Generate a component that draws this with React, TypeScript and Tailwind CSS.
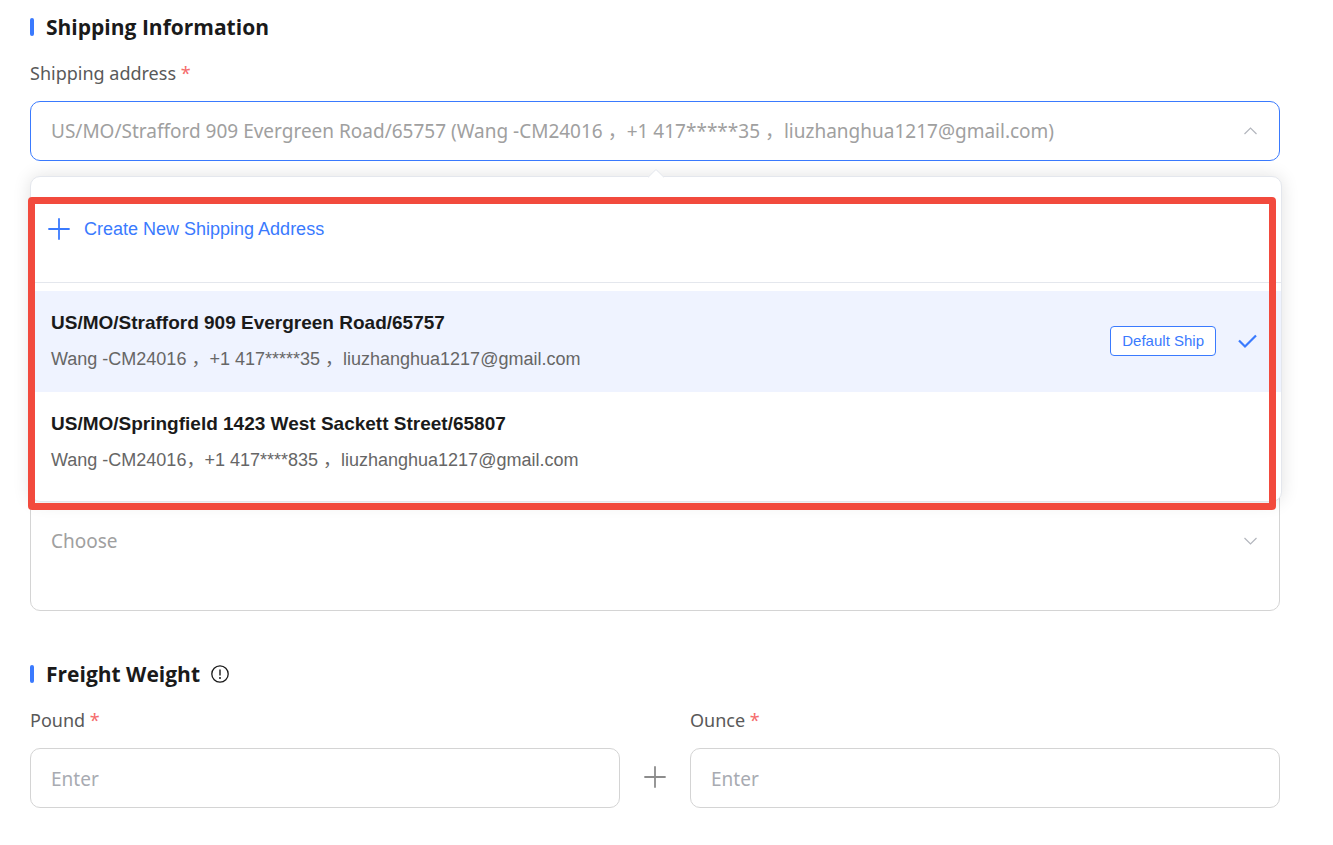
import type { ReactNode } from 'react';

type Address = {
  title: string;
  contact: string;
  isDefault?: boolean;
};

const addresses: Address[] = [
  {
    title: 'US/MO/Strafford 909 Evergreen Road/65757',
    contact: 'Wang -CM24016 ，+1 417*****35 ，liuzhanghua1217@gmail.com',
    isDefault: true,
  },
  {
    title: 'US/MO/Springfield 1423 West Sackett Street/65807',
    contact: 'Wang -CM24016，+1 417****835 ，liuzhanghua1217@gmail.com',
  },
];

function SectionTitle({ children }: { children: ReactNode }) {
  return (
    <h2 className="flex items-center font-['Open_Sans',sans-serif] text-[21px] leading-[30px] font-bold text-[#1a1a1a]">
      <span className="mr-3 h-[18px] w-1 rounded-[2px] bg-[#3a7afe]" />
      {children}
    </h2>
  );
}

function FieldLabel({ htmlFor, children }: { htmlFor: string; children: ReactNode }) {
  return (
    <label htmlFor={htmlFor} className="mt-4 mb-[13px] block text-lg leading-[30px] text-[#595959]">
      {children} <span className="text-[#f56c6c]">*</span>
    </label>
  );
}

function Chevron({ up = false }: { up?: boolean }) {
  return (
    <svg
      className="pointer-events-none col-start-1 row-start-1 mr-[22px] justify-self-end"
      width="14"
      height="10"
      viewBox="0 0 14 10"
      fill="none"
      stroke="#b3b6bd"
      strokeWidth="1.2"
      aria-hidden="true"
    >
      <path d={up ? 'M0.5 8 L6.5 2 L12.5 8' : 'M0.5 2 L6.5 8 L12.5 2'} />
    </svg>
  );
}

function PlusIcon({ className }: { className: string }) {
  return (
    <svg className={className} width="22" height="22" viewBox="0 0 22 22" fill="none" stroke="currentColor" aria-hidden="true">
      <path d="M11 1V21M1 11H21" strokeWidth="1.8" strokeLinecap="round" />
    </svg>
  );
}

function AddressOption({ address }: { address: Address }) {
  return (
    <li
      role="option"
      aria-selected={!!address.isDefault}
      className={`flex h-[101px] items-center pr-6 pb-0.5 pl-5 ${address.isDefault ? 'bg-[#eff3ff]' : 'bg-white'}`}
    >
      <div className="flex flex-1 flex-col gap-2">
        <span className="text-[19px] leading-7 font-bold text-[#1a1a1a]">{address.title}</span>
        <span className="text-lg leading-7 text-[#666]">{address.contact}</span>
      </div>
      {address.isDefault && (
        <>
          <span className="rounded border border-[#3a7afe] bg-white px-[11px] text-[15px] leading-7 text-[#3a7afe]">
            Default Ship
          </span>
          <svg className="ml-[21px]" width="20" height="16" viewBox="0 0 20 16" fill="none" stroke="#3a7afe" strokeWidth="2.2" aria-hidden="true">
            <path d="M2 7.5 L8 13.5 L19 2.5" />
          </svg>
        </>
      )}
    </li>
  );
}

function AddressMenu() {
  return (
    <div className="absolute top-full right-[-2px] left-0 z-10 mt-[15px] font-['Liberation_Sans','Noto_Sans_CJK_SC',sans-serif]">
      <div className="rounded-[10px] border border-[#e4e7ed] bg-white shadow-[0_0_18px_rgba(0,0,0,0.12)]">
        <button type="button" className="flex w-full items-center border-b border-[#e4e7ed] pt-[37px] pb-[38px] pl-[17px] text-lg leading-[30px] text-[#3a7afe]">
          <PlusIcon className="mr-[14px]" />
          Create New Shipping Address
        </button>
        <ul role="listbox" aria-label="Shipping address" className="py-2">
          {addresses.map((address) => (
            <AddressOption key={address.title} address={address} />
          ))}
        </ul>
      </div>
      {/* pointer towards the field */}
      <div className="absolute top-[-5px] left-1/2 size-3 -translate-x-1/2 rotate-45 rounded-tl-[2px] border-t border-l border-[#e4e7ed] bg-white" />
      {/* highlight frame over the list */}
      <div className="pointer-events-none absolute top-[21px] right-[6px] bottom-[-8px] left-[-2px] rounded border-[7px] border-[#f24a3d]" />
    </div>
  );
}

function WeightField({ id, label }: { id: string; label: string }) {
  return (
    <div className="flex-1">
      <FieldLabel htmlFor={id}>{label}</FieldLabel>
      <input
        id={id}
        type="text"
        placeholder="Enter"
        className="block h-[60px] w-full rounded-[10px] border border-[#d4d4d4] px-5 pt-0.5 text-[19px] text-[#1a1a1a] outline-none placeholder:text-[#a8abb2]"
      />
    </div>
  );
}

export default function App() {
  return (
    <main className="bg-white pt-3 pr-[53px] pb-9 pl-[30px] font-['Noto_Sans','Noto_Sans_CJK_SC',sans-serif]">
      <section>
        <SectionTitle>Shipping Information</SectionTitle>
        <FieldLabel htmlFor="address">Shipping address</FieldLabel>
        <div className="relative grid items-center">
          <select
            id="address"
            className="col-start-1 row-start-1 h-[60px] w-full appearance-none rounded-[10px] border border-[#3a7afe] bg-white px-5 text-[19px] text-[#a0a0a0] outline-none"
          >
            <option>US/MO/Strafford 909 Evergreen Road/65757 (Wang -CM24016 ，+1 417*****35 ，liuzhanghua1217@gmail.com)</option>
          </select>
          <Chevron up />
          <AddressMenu />
        </div>
        <div className="mt-[310px] grid items-center">
          <select
            aria-label="Choose"
            className="col-start-1 row-start-1 h-[140px] w-full appearance-none rounded-[10px] border border-[#d4d4d4] bg-white px-5 text-[19px] text-[#a0a0a0] outline-none"
          >
            <option>Choose</option>
          </select>
          <Chevron />
        </div>
      </section>

      <section className="mt-12">
        <SectionTitle>
          Freight Weight
          <svg className="ml-[11px]" width="18" height="18" viewBox="0 0 18 18" fill="none" stroke="#1a1a1a" aria-hidden="true">
            <circle cx="9" cy="9" r="8.2" strokeWidth="1.3" />
            <path d="M9 4.5V10.5" strokeWidth="1.4" />
            <circle cx="9" cy="13" r="1" fill="#1a1a1a" stroke="none" />
          </svg>
        </SectionTitle>
        <div className="flex items-end">
          <WeightField id="pound" label="Pound" />
          <PlusIcon className="mx-6 mb-5 text-[#8c8c8c]" />
          <WeightField id="ounce" label="Ounce" />
        </div>
      </section>
    </main>
  );
}
